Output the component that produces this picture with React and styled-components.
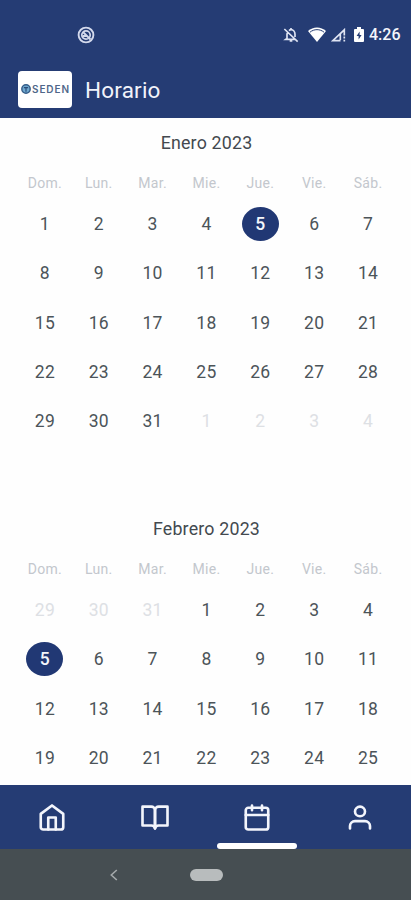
import styled, { createGlobalStyle } from "styled-components";

const DAY_NAMES = ["Dom.", "Lun.", "Mar.", "Mie.", "Jue.", "Vie.", "Sáb."];

// February stops at the last week that fits above the tab bar
const MONTHS = [
  { name: "Enero 2023", lead: [], days: 31, trail: [1, 2, 3, 4], selected: 5 },
  {
    name: "Febrero 2023",
    lead: [29, 30, 31],
    days: 25,
    trail: [],
    selected: 5,
  },
];

const buildDays = ({ lead, days, trail, selected }) => [
  ...lead.map((day) => ({ day, muted: true, key: `lead-${day}` })),
  ...Array.from({ length: days }, (_, i) => ({
    day: i + 1,
    selected: i + 1 === selected,
    key: `day-${i + 1}`,
  })),
  ...trail.map((day) => ({ day, muted: true, key: `trail-${day}` })),
];

const Month = ({ month }) => (
  <MonthSection>
    <MonthTitle>{month.name}</MonthTitle>
    <DayNames>
      {DAY_NAMES.map((name) => (
        <DayName key={name}>{name}</DayName>
      ))}
    </DayNames>
    <Days>
      {buildDays(month).map((item) => (
        <Day key={item.key} $muted={item.muted} $selected={item.selected}>
          <span>{item.day}</span>
        </Day>
      ))}
    </Days>
  </MonthSection>
);

const TABS = [
  {
    id: "home",
    icon: (
      <>
        <path d="M3 9l9-7 9 7v11a2 2 0 0 1-2 2H5a2 2 0 0 1-2-2z" />
        <path d="M9 22V12h6v10" />
      </>
    ),
  },
  {
    id: "courses",
    icon: (
      <>
        <path d="M2 3h7a3 3 0 0 1 3 3v15a3 3 0 0 0-3-2.4H2z" />
        <path d="M22 3h-7a3 3 0 0 0-3 3v15a3 3 0 0 1 3-2.4h7z" />
      </>
    ),
  },
  {
    id: "schedule",
    active: true,
    icon: (
      <>
        <rect x="3" y="4" width="18" height="18" rx="2" />
        <path d="M16 2v4M8 2v4M3 10h18" />
      </>
    ),
  },
  {
    id: "profile",
    icon: (
      <>
        <path d="M20 21v-2a4 4 0 0 0-4-4H8a4 4 0 0 0-4 4v2" />
        <circle cx="12" cy="7" r="4" />
      </>
    ),
  },
];

const App = () => (
  <Screen>
    <GlobalStyle />
    <StatusBar>
      <svg width="18" height="18" viewBox="0 0 18 18" fill="none">
        <circle cx="9" cy="9" r="7.4" stroke="#d3d9ec" strokeWidth="1.9" />
        <circle cx="9" cy="9" r="4.2" stroke="#d3d9ec" strokeWidth="1.7" />
        <path d="M6 6l7.5 7.5M5.5 10h4" stroke="#d3d9ec" strokeWidth="1.8" />
      </svg>
      <StatusIcons>
        <svg width="16" height="16" viewBox="0 0 24 24" fill="none" stroke="#dfe4f3" strokeWidth="2.5">
          <path d="M7 7.5C6.3 9 6 10 6 11v6l-2 1.5h15M9 5.4C10 4.5 11 4 12 4c3.5 0 6 3 6 7v4M2 3l20 19M10 21h4M12 1.5V4" />
        </svg>
        <svg width="18" height="15" viewBox="0 0 18 15">
          <path d="M0 4C5-.8 13-.8 18 4L9 15z" fill="#fff" />
          <path d="M2 5.2c4-3.4 10-3.4 14 0" stroke="#253c74" strokeWidth="1" fill="none" />
        </svg>
        <svg width="15" height="14" viewBox="0 0 15 14" fill="none" stroke="#dfe4f3" strokeWidth="1.7">
          <path d="M9.5 12.7H1.8L13.3 1.8v5.7M9.3 6v6M13.3 8.5v2M13.3 11.8v1.7" />
        </svg>
        <svg width="10" height="15" viewBox="0 0 10 15">
          <path d="M3 0h4v2h2a1 1 0 0 1 1 1v11a1 1 0 0 1-1 1H1a1 1 0 0 1-1-1V3a1 1 0 0 1 1-1h2z" fill="#fff" />
          <path d="M5.6 4.5L2.6 9h2v3.5l3-4.5h-2z" fill="#253c74" />
        </svg>
      </StatusIcons>
      <Clock>4:26</Clock>
    </StatusBar>
    <AppBar>
      <Logo>
        <svg width="10" height="10" viewBox="0 0 11 11">
          <circle cx="5.5" cy="5.5" r="4.6" fill="#6fa9cf" stroke="#355d89" strokeWidth="1.6" />
          <path d="M3.2 4h4.6M5.5 4v4.5" stroke="#294b79" strokeWidth="1.3" />
        </svg>
        <LogoText>SEDEN</LogoText>
      </Logo>
      <PageTitle>Horario</PageTitle>
    </AppBar>
    <Calendar>
      {MONTHS.map((month) => (
        <Month key={month.name} month={month} />
      ))}
    </Calendar>
    <TabBar>
      {TABS.map((tab) => (
        <Tab key={tab.id} $active={tab.active}>
          <TabIcon viewBox="0 0 24 24" preserveAspectRatio="none">
            {tab.icon}
          </TabIcon>
        </Tab>
      ))}
    </TabBar>
    <SystemBar>
      <svg width="8" height="12" viewBox="0 0 8 12" fill="none">
        <path d="M6.8 1L1.3 6l5.5 5" stroke="#a4a9ab" strokeWidth="1.6" />
      </svg>
      <HomePill />
      <span />
    </SystemBar>
  </Screen>
);

// Styled Components
const GlobalStyle = createGlobalStyle`
  * {
    box-sizing: border-box;
  }

  body {
    margin: 0;
    font-family: Roboto, "Liberation Sans", sans-serif;
  }
`;

const Screen = styled.div`
  display: flex;
  flex-direction: column;
  width: 411px;
  height: 900px;
  overflow: hidden;
  background: #fefefe;
`;

const StatusBar = styled.div`
  display: flex;
  align-items: center;
  flex: none;
  height: 60px;
  padding: 9px 10px 0 77px;
  background: #253c74;
`;

const StatusIcons = styled.div`
  display: flex;
  align-items: center;
  margin-left: auto;

  svg:nth-child(2) {
    margin-left: 9px;
  }

  svg:nth-child(3) {
    margin-left: 5px;
  }

  svg:nth-child(4) {
    margin-left: 8px;
  }
`;

const Clock = styled.div`
  width: 32px;
  margin-left: 5px;
  color: #f4f6fc;
  font-size: 16px;
  font-weight: 500;
  line-height: 18px;
`;

const AppBar = styled.header`
  display: flex;
  align-items: center;
  flex: none;
  height: 58px;
  padding: 0 18px;
  background: #253c74;
`;

const Logo = styled.div`
  display: flex;
  align-items: center;
  width: 54px;
  height: 37px;
  padding: 0 0 1px 3px;
  border-radius: 4px;
  background: #fff;
`;

const LogoText = styled.span`
  margin-left: 1px;
  color: #50678a;
  font-family: Inter, sans-serif;
  font-size: 10px;
  font-weight: 600;
  letter-spacing: 0.9px;
  line-height: 12px;
`;

const PageTitle = styled.h1`
  margin: 1px 0 0 13px;
  color: #f1f3fa;
  font-size: 22.5px;
  font-weight: 400;
  letter-spacing: 0.2px;
`;

const Calendar = styled.main`
  flex: 1;
  min-height: 0;
  overflow: hidden;
`;

const MonthSection = styled.section`
  height: 386px;
  padding: 0 16px 0 18px;
`;

const MonthTitle = styled.h2`
  height: 48px;
  margin: 0;
  color: #43494f;
  font-size: 17.8px;
  font-weight: 400;
  letter-spacing: 0.2px;
  line-height: 49px;
  text-align: center;
`;

const DayNames = styled.div`
  display: grid;
  grid-template-columns: repeat(7, 1fr);
  height: 33.5px;
`;

const DayName = styled.div`
  color: #c3c7cd;
  font-size: 14px;
  letter-spacing: 0.3px;
  line-height: 35px;
  text-align: center;
`;

const Days = styled.div`
  display: grid;
  grid-template-columns: repeat(7, 1fr);
  grid-auto-rows: 49.3px;
`;

const Day = styled.div`
  display: flex;
  align-items: center;
  justify-content: center;

  span {
    display: flex;
    align-items: center;
    justify-content: center;
    width: 37px;
    height: 34px;
    border-radius: 50%;
    background: ${(props) => (props.$selected ? "#213874" : "transparent")};
    color: ${(props) =>
      props.$selected ? "#f4f6fb" : props.$muted ? "#dde0e4" : "#4c5459"};
    font-size: 17.5px;
    font-weight: ${(props) => (props.$selected ? 500 : 400)};
    letter-spacing: 0.3px;
  }
`;

const TabBar = styled.nav`
  display: grid;
  grid-template-columns: repeat(4, 1fr);
  flex: none;
  height: 64px;
  padding-left: 1px;
  background: #253c74;
`;

const Tab = styled.div`
  display: flex;
  flex-direction: column;
  align-items: center;
  padding-top: 18px;

  &::after {
    content: "";
    width: 80px;
    height: 6px;
    margin-top: auto;
    border-radius: 3px;
    background: ${(props) => (props.$active ? "#fff" : "transparent")};
  }
`;

const TabIcon = styled.svg`
  width: 30px;
  height: 29px;
  fill: none;
  stroke: #f3f5fc;
  stroke-width: 2.1;
  stroke-linecap: round;
  stroke-linejoin: round;
`;

const SystemBar = styled.div`
  display: grid;
  grid-template-columns: 8px 32px 8px;
  align-items: center;
  justify-content: center;
  gap: 72px;
  flex: none;
  height: 51px;
  background: #464e52;
`;

const HomePill = styled.div`
  width: 33px;
  height: 12px;
  border-radius: 6px;
  background: #b8bcbd;
`;

export default App;
